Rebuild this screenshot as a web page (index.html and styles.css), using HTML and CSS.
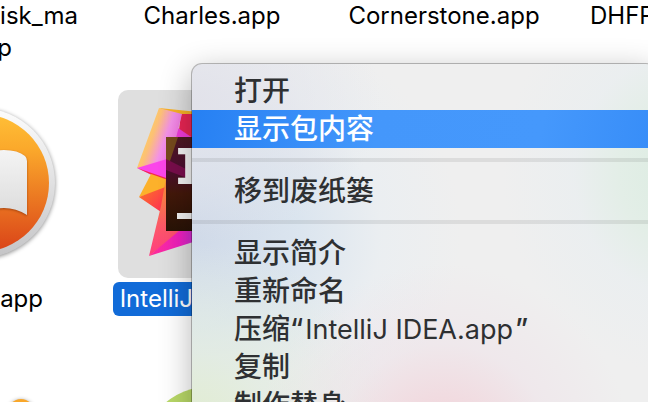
FILE: index.html
```
<!DOCTYPE html>
<html lang="zh-CN">
<head>
  <meta charset="UTF-8">
  <title>应用程序</title>
  <link rel="stylesheet" href="styles.css">
</head>
<body>
  <main class="finder">
    <!-- row 1: only labels -->
    <div class="label label-first">disk_ma</div>
    <div class="label">Charles.app</div>
    <div class="label">Cornerstone.app</div>
    <div class="label label-last">DHFP</div>
    <div class="label label-wrap">p</div>

    <!-- row 2 -->
    <div class="app app-first">
      <svg class="icon" viewBox="0 0 188 188">
        <defs>
          <linearGradient id="rim" x1="0" y1="0" x2="0" y2="1">
            <stop offset="0" stop-color="#fdfdfd"/>
            <stop offset="1" stop-color="#c4c4c6"/>
          </linearGradient>
          <linearGradient id="books" x1="0" y1="0" x2="0" y2="1">
            <stop offset="0" stop-color="#ffbf37"/>
            <stop offset="0.25" stop-color="#fba92b"/>
            <stop offset="1" stop-color="#da4318"/>
          </linearGradient>
          <linearGradient id="paper" x1="0" y1="0" x2="0" y2="1">
            <stop offset="0" stop-color="#f4f4f4"/>
            <stop offset="1" stop-color="#dcdcdc"/>
          </linearGradient>
        </defs>
        <circle class="disc" cx="94" cy="93" r="75" fill="url(#rim)"/>
        <circle cx="94" cy="93" r="69" fill="url(#books)"/>
        <path class="page" d="M94 66Q104 60 118 60Q132 60 139 66Q141 68 141 71V125Q130 118 118 118Q104 118 94 124Z" fill="url(#paper)"/>
      </svg>
      <div class="label">app</div>
    </div>
    <div class="app selected">
      <svg class="icon" viewBox="0 0 188 188">
        <defs>
          <linearGradient id="wing" x1="0.2" y1="0.3" x2="0.8" y2="0.6">
            <stop offset="0" stop-color="#ffd05c"/>
            <stop offset="0.3" stop-color="#fcc076"/>
            <stop offset="0.7" stop-color="#f391e8"/>
            <stop offset="1" stop-color="#f27be2"/>
          </linearGradient>
          <linearGradient id="flame" x1="0" y1="0" x2="1" y2="1">
            <stop offset="0" stop-color="#fb7a24"/>
            <stop offset="1" stop-color="#ff1d5e"/>
          </linearGradient>
          <linearGradient id="tail" x1="0" y1="0" x2="0" y2="1">
            <stop offset="0" stop-color="#f5922f"/>
            <stop offset="0.6" stop-color="#fc5a66"/>
            <stop offset="1" stop-color="#ff3d80"/>
          </linearGradient>
          <linearGradient id="violet" x1="0" y1="0" x2="1" y2="0">
            <stop offset="0" stop-color="#ff2f92"/>
            <stop offset="0.4" stop-color="#ee1fc0"/>
            <stop offset="1" stop-color="#6f5cff"/>
          </linearGradient>
          <linearGradient id="tile" x1="0" y1="0" x2="0" y2="1">
            <stop offset="0" stop-color="#4d1a21"/>
            <stop offset="0.35" stop-color="#4b0c30"/>
            <stop offset="0.6" stop-color="#43180a"/>
            <stop offset="1" stop-color="#281306"/>
          </linearGradient>
        </defs>
        <path d="M41 18L100 24V28H62Z" fill="#f7b125"/>
        <path d="M63 24H110V80H56Z" fill="#e82553"/>
        <path d="M60 38L110 72V80H48Z" fill="#ee3bd9"/>
        <path d="M41 18L64 24L50 80L19 78Z" fill="url(#wing)"/>
        <path d="M19 78L49 69L90 70V112Z" fill="#fb45ea"/>
        <path d="M19 78L60 92V97Z" fill="#f02c4a"/>
        <path d="M33 84L50 90V98L21 107Z" fill="#fcb12b"/>
        <path d="M21 107L50 96V127L43 122Z" fill="url(#flame)"/>
        <path d="M48 88V141L64 141L31 166L43 116Z" fill="url(#tail)"/>
        <path d="M31 166L62 140H110V141Z" fill="url(#violet)"/>
        <rect x="48" y="47" width="94" height="94" fill="url(#tile)"/>
        <path d="M48 47H60L49 80H48Z" fill="#754a1c"/>
        <path d="M48 69L90 90V96L48 80Z" fill="#780d4b"/>
        <text class="ij" x="56" y="94">IJ</text>
        <rect x="59" y="123" width="36" height="6" fill="#f2f2f2"/>
      </svg>
      <div class="label">IntelliJ IDEA.app</div>
    </div>

    <!-- row 3 -->
    <div class="app app-first app-row3">
      <svg class="icon" viewBox="0 0 188 188">
        <circle class="disc" cx="135" cy="38" r="13" fill="#f9a72a"/>
      </svg>
    </div>
    <div class="app app-row3">
      <svg class="icon" viewBox="0 0 188 188">
        <circle cx="94" cy="85" r="73" fill="#b9d968"/>
      </svg>
    </div>
  </main>

  <div class="menu" role="menu">
    <button class="item" role="menuitem">打开</button>
    <button class="item active" role="menuitem">显示包内容</button>
    <hr>
    <button class="item" role="menuitem">移到废纸篓</button>
    <hr>
    <button class="item" role="menuitem">显示简介</button>
    <button class="item" role="menuitem">重新命名</button>
    <button class="item" role="menuitem">压缩“<span class="name">IntelliJ IDEA.app</span>”</button>
    <button class="item" role="menuitem">复制</button>
    <button class="item" role="menuitem">制作替身</button>
  </div>
</body>
</html>
```
FILE: styles.css
```
body {
  margin: 0;
  height: 100vh;
  position: relative;
  overflow: hidden;
  background: #fff;
  color: #000;
  font-family: Inter, "Noto Sans CJK SC", sans-serif;
}
.finder {
  display: grid;
  grid-template-columns: 96px 232px 232px 1fr;
  grid-template-rows: 32px 58px 284px 188px;
}
.label {
  font-size: 24px;
  line-height: 32px;
  text-align: center;
  white-space: nowrap;
}
.label-first {
  justify-self: end;
  padding-right: 18px;
}
.label-wrap {
  grid-column: 1;
  justify-self: end;
  padding-right: 84px;
}
.label-last {
  justify-self: start;
  padding-left: 30px;
}
.app {
  display: flex;
  flex-direction: column;
  align-items: center;
  gap: 4px;
  grid-row: 3;
  grid-column: 2;
}
.app-first {
  grid-column: 1;
  align-items: flex-end;
}
.app-first .icon {
  margin-right: 22px;
}
.app-first .label {
  padding-right: 53px;
  line-height: 34px;
}
.app-row3 {
  grid-row: 4;
}
.icon {
  width: 188px;
  height: 188px;
  flex: none;
  border-radius: 10px;
}
.disc {
  filter: drop-shadow(0 1px 2px rgba(0, 0, 0, 0.45));
}
.page {
  filter: drop-shadow(0 1px 1px rgba(120, 40, 0, 0.6));
}
.selected .icon {
  background: #dfdfdf;
}
.selected .label {
  padding: 0 7px;
  line-height: 34px;
  border-radius: 6px;
  background: #116bd8;
  color: #fff;
}
.ij {
  font-family: "DejaVu Sans Mono", monospace;
  font-size: 49px;
  font-weight: bold;
  fill: #f2f2f2;
}

/* context menu */
.menu {
  position: absolute;
  top: 64px;
  left: 192px;
  right: -8px;
  padding: 8px 0;
  border-radius: 10px;
  background:
    radial-gradient(circle at 250px 390px, rgba(244, 200, 208, 0.85), rgba(239, 225, 232, 0.5) 110px, rgba(239, 239, 239, 0) 190px),
    radial-gradient(ellipse 180px 200px at 490px 110px, #dbece1, #e3eee7 35%, rgba(233, 238, 240, 0.7) 60%, rgba(239, 239, 239, 0)),
    radial-gradient(ellipse 200px 180px at 0 360px, #e0ecd0, rgba(226, 236, 222, 0.7) 40%, rgba(239, 239, 239, 0)),
    radial-gradient(ellipse 190px 140px at 0 40px, #e2e2ea, rgba(226, 226, 234, 0.6) 40%, rgba(239, 239, 239, 0)),
    radial-gradient(ellipse 270px 230px at 0 170px, #cfd9e8, #dbe5ef 40%, rgba(233, 238, 242, 0.7) 70%, rgba(239, 239, 239, 0)),
    #efefef;
  box-shadow: 0 0 0 1px rgba(0, 0, 0, 0.25), 0 8px 32px rgba(0, 0, 0, 0.3);
}
.item {
  display: block;
  width: 100%;
  height: 38px;
  padding: 0 42px;
  border: none;
  background: none;
  color: #2e3032;
  font-family: inherit;
  font-size: 28px;
  font-weight: 500;
  line-height: 38px;
  text-align: left;
  white-space: nowrap;
}
.item .name {
  padding: 0 2px;
  font-size: 27px;
  font-weight: 400;
}
.item.active {
  background: linear-gradient(100deg, #2680f3, #4497fb 40%, #4598fc 75%, #378df8);
  color: #fff;
}
.menu hr {
  height: 4px;
  margin: 10px 0;
  border: none;
  background: rgba(0, 0, 0, 0.08);
}
```
